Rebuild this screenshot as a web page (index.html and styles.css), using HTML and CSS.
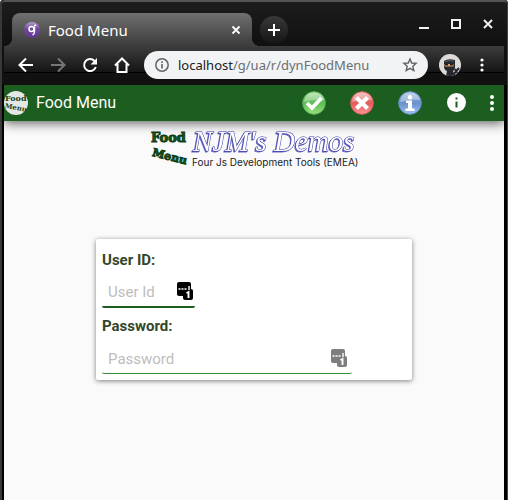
FILE: index.html
```html
<!DOCTYPE html>
<html lang="en">
<head>
<meta charset="utf-8">
<title>Food Menu</title>
<link rel="stylesheet" href="styles.css">
</head>
<body>
<div class="window">
  <header class="chrome">
    <div class="tabstrip">
      <div class="tab">
        <svg class="favicon" width="16" height="16" viewBox="0 0 16 16" aria-hidden="true">
          <defs><linearGradient id="violet" x2="0" y2="1"><stop offset="0" stop-color="#b49acb"/><stop offset=".45" stop-color="#70489a"/><stop offset="1" stop-color="#5f3693"/></linearGradient></defs>
          <circle cx="8" cy="8" r="8" fill="url(#violet)"/>
          <circle cx="7.500" cy="7" r="2.500" fill="none" stroke="#fff" stroke-width="1.500"/>
          <path d="M10.500 5v4.500c0 2-.8 3-2 3.500M10 4l2-1" fill="none" stroke="#fff" stroke-width="1.400"/>
        </svg>
        <span class="tab-title">Food Menu</span>
        <button class="icon-button close" aria-label="Close tab"><svg width="10" height="10" viewBox="0 0 10 10"><path d="M1.500 1.500l7 7m0-7l-7 7" stroke="#fff" stroke-width="1.800"/></svg></button>
      </div>
      <button class="new-tab" aria-label="New tab"><svg width="14" height="14" viewBox="0 0 14 14"><path d="M7 1v12M1 7h12" stroke="#fff" stroke-width="2"/></svg></button>
      <div class="window-buttons">
        <button class="icon-button" aria-label="Minimize"><svg width="10" height="10" viewBox="0 0 10 10"><path d="M0 9h10" stroke="#f1f1f1" stroke-width="2"/></svg></button>
        <button class="icon-button" aria-label="Maximize"><svg width="10" height="10" viewBox="0 0 10 10"><path d="M1 1h8v8H1z" fill="none" stroke="#f1f1f1" stroke-width="2"/></svg></button>
        <button class="icon-button" aria-label="Close window"><svg width="10" height="10" viewBox="0 0 10 10"><path d="M1 1l8 8m0-8L1 9" stroke="#f1f1f1" stroke-width="2"/></svg></button>
      </div>
    </div>
    <nav class="toolbar">
      <button class="icon-button" aria-label="Back"><svg width="16" height="16" viewBox="0 0 16 16"><path d="M15 8H2M8 1.500L1.500 8 8 14.500" fill="none" stroke="#fff" stroke-width="2"/></svg></button>
      <button class="icon-button" aria-label="Forward"><svg width="16" height="16" viewBox="0 0 16 16"><path d="M1 8h13M8 1.500L14.500 8 8 14.500" fill="none" stroke="#777" stroke-width="2"/></svg></button>
      <button class="icon-button" aria-label="Reload"><svg width="16" height="16" viewBox="0 0 16 16"><path d="M13.800 10A6 6 0 1 1 12.500 4" fill="none" stroke="#fff" stroke-width="2"/><path d="M15 1v6.500H8.500z" fill="#fff"/></svg></button>
      <button class="icon-button" aria-label="Home"><svg width="16" height="16" viewBox="0 0 16 16"><path d="M1 8.500L8 1.500l7 7M3.500 7v8h9V7" fill="none" stroke="#fff" stroke-width="2"/></svg></button>
      <div class="address">
        <svg width="14" height="14" viewBox="0 0 14 14" aria-hidden="true"><circle cx="7" cy="7" r="6.200" fill="none" stroke="#5f6368" stroke-width="1.500"/><path d="M7 6v4.500M7 3.300v1.600" stroke="#5f6368" stroke-width="1.600"/></svg>
        <span class="url"><span class="host">localhost</span>/g/ua/r/dynFoodMenu</span>
        <button class="icon-button" aria-label="Bookmark"><svg width="16" height="16" viewBox="0 0 16 16"><path d="M8 2l1.700 4 4.400.4-3.300 2.900 1 4.300L8 11.300l-3.800 2.300 1-4.300L1.900 6.400 6.300 6z" fill="none" stroke="#5f6368" stroke-width="1.400"/></svg></button>
      </div>
      <button class="icon-button avatar" aria-label="Profile">
        <svg width="22" height="22" viewBox="0 0 22 22"><defs><clipPath id="face"><circle cx="11" cy="11" r="11"/></clipPath></defs><g clip-path="url(#face)"><path d="M0 0h22v22H0z" fill="#dedad8"/><path d="M5 7Q9 4 16 6v8q-1 4-5 4-6-1-6-5z" fill="#25282d"/><path d="M5.500 10h9v2.500h-9z" fill="#dda06b"/><path d="M6 10.800h3m2 0h3" stroke="#26211f" stroke-width="1.400"/><path d="M8 17h6l2 5H7z" fill="#24272d"/><path d="M14 21l6-7M16 15l2 4" stroke="#24272d" stroke-width="2"/><path d="M6 7.500q4-1.500 9-.5" fill="none" stroke="#596471"/></g></svg>
      </button>
      <button class="icon-button" aria-label="Browser menu"><svg width="4" height="14" viewBox="0 0 4 14" fill="#fff"><circle cx="2" cy="2" r="1.600"/><circle cx="2" cy="7" r="1.600"/><circle cx="2" cy="12" r="1.600"/></svg></button>
    </nav>
  </header>

  <div class="page">
    <header class="appbar">
      <svg class="app-logo" width="24" height="24" viewBox="0 0 24 24" aria-hidden="true">
        <circle cx="12" cy="12" r="12" fill="#e4e8e4"/>
        <g class="stamp"><text x="1" y="10">Food</text><text class="stamp-lower" x="1" y="17" transform="rotate(10 1 14)">Menu</text></g>
      </svg>
      <h1>Food Menu</h1>
      <div class="actions">
        <button class="icon-button" aria-label="Accept"><svg width="24" height="24" viewBox="0 0 24 24"><defs><linearGradient id="green" x2="0" y2="1"><stop stop-color="#a9dda2"/><stop offset=".5" stop-color="#5dbb57"/><stop offset="1" stop-color="#9be17b"/></linearGradient></defs><circle cx="12" cy="12" r="11.300" fill="url(#green)" stroke="#62b65a"/><path d="M2 11Q3 2 12 1.500 21 2 22 9 12 8 2 11z" fill="#fff" opacity=".3"/><path d="M5 12l5 5 9.500-10" fill="none" stroke="#fff" stroke-width="3.800"/></svg></button>
        <button class="icon-button" aria-label="Cancel"><svg width="24" height="24" viewBox="0 0 24 24"><defs><linearGradient id="red" x2="0" y2="1"><stop stop-color="#f5b0b0"/><stop offset=".5" stop-color="#e45a5a"/><stop offset="1" stop-color="#ff9696"/></linearGradient></defs><circle cx="12" cy="12" r="11.300" fill="url(#red)" stroke="#dc5f5f"/><path d="M2 11Q3 2 12 1.500 21 2 22 9 12 8 2 11z" fill="#fff" opacity=".3"/><path d="M6.500 6.500l11 11m0-11l-11 11" stroke="#fff" stroke-width="4.200"/></svg></button>
        <button class="icon-button" aria-label="About"><svg width="24" height="24" viewBox="0 0 24 24"><defs><linearGradient id="blue" x2="0" y2="1"><stop stop-color="#a9c2e5"/><stop offset=".5" stop-color="#6890cb"/><stop offset="1" stop-color="#9fc0ee"/></linearGradient></defs><circle cx="12" cy="12" r="11.300" fill="url(#blue)" stroke="#6b91c8"/><path d="M2 11Q3 2 12 1.500 21 2 22 9 12 8 2 11z" fill="#fff" opacity=".3"/><circle cx="12" cy="6.200" r="2.200" fill="#fff"/><path d="M8 9.500h6v8h2.500V20h-9v-2.500H10V12H8z" fill="#fff"/></svg></button>
        <button class="icon-button" aria-label="Information"><svg width="24" height="24" viewBox="0 0 24 24"><circle cx="10.500" cy="11.500" r="9.500" fill="#fff"/><path d="M10.500 10.500v6M10.500 6.500v2" stroke="#1b5e20" stroke-width="2"/></svg></button>
        <button class="icon-button more" aria-label="More"><svg width="4" height="16" viewBox="0 0 4 16" fill="#fff"><circle cx="2" cy="2" r="2"/><circle cx="2" cy="8" r="2"/><circle cx="2" cy="14" r="2"/></svg></button>
      </div>
    </header>

    <main>
      <svg class="banner" width="208" height="46" viewBox="0 0 208 46" role="img" aria-label="NJM's Demos">
        <g class="wordmark"><text x="1" y="17">Food</text><text class="lower" x="3" y="31" transform="rotate(14 3 26)">Menu</text></g>
        <text class="script" x="43" y="26">NJM's Demos</text>
        <text class="tagline" x="42" y="41">Four Js Development Tools (EMEA)</text>
      </svg>
      <form class="card">
        <label for="user">User ID:</label>
        <div class="field user-field">
          <input id="user" type="text" placeholder="User Id">
          <svg class="key" width="18" height="18" viewBox="0 0 18 18" aria-hidden="true"><rect x="1" width="14" height="14" rx="2"/><rect x="7" y="7" width="10" height="11" rx="2"/><path d="M2.500 7h2M5.500 7h2M8.500 7h2M13 4v4" stroke="#fff" stroke-width="1.400"/><path d="M10.500 11l2-1v6" fill="none" stroke="#fff" stroke-width="1.900"/></svg>
        </div>
        <label for="password">Password:</label>
        <div class="field password-field">
          <input id="password" type="password" placeholder="Password">
          <svg class="key" width="18" height="18" viewBox="0 0 18 18" aria-hidden="true"><rect x="1" width="14" height="14" rx="2"/><rect x="7" y="7" width="10" height="11" rx="2"/><path d="M2.500 7h2M5.500 7h2M8.500 7h2M13 4v4" stroke="#fff" stroke-width="1.400"/><path d="M10.500 11l2-1v6" fill="none" stroke="#fff" stroke-width="1.900"/></svg>
        </div>
      </form>
    </main>
  </div>
</div>
</body>
</html>
```
FILE: styles.css
```css
* { box-sizing: border-box; }
body { margin: 0; background: #fff; font-family: Roboto, sans-serif; }
button { margin: 0; padding: 0; border: 0; background: none; }
svg { display: block; flex: none; }

.window {
  display: flex;
  flex-direction: column;
  min-height: 100vh;
  padding: 0 3px 0 2px;
  border-left: 2px solid #383838;
  border-right: 1px solid #444;
  border-radius: 3px 3px 0 0;
  background: #000;
}

.icon-button { display: flex; align-items: center; justify-content: center; flex: none; }

.chrome {
  margin: 0 -3px 0 -2px;
  padding: 0 3px 1px 2px;
  border-top: 2px solid #555;
  border-radius: 3px 3px 0 0;
  background: linear-gradient(#1d1d1d, #101010 44px);
  font-family: "Noto Sans", sans-serif;
}
.tabstrip { display: flex; height: 44px; padding: 11px 11px 0 8px; }
.tab {
  position: relative;
  display: flex;
  align-items: center;
  width: 240px;
  padding: 0 11px 0 12px;
  border-radius: 8px 8px 0 0;
  background: linear-gradient(#707070, #3c3c3c);
}
.tab::before, .tab::after {
  content: "";
  position: absolute;
  bottom: 0;
  width: 8px;
  height: 8px;
}
.tab::before { right: 100%; background: radial-gradient(circle at 0 0, transparent 8px, #404040 8px); }
.tab::after { left: 100%; background: radial-gradient(circle at 100% 0, transparent 8px, #404040 8px); }
.tab-title { flex: 1; padding-left: 8px; color: #fff; font-size: 15px; line-height: 24px; }
.new-tab {
  display: flex;
  align-items: center;
  justify-content: center;
  width: 28px;
  height: 28px;
  margin: 3px 0 0 8px;
  border-radius: 50%;
  background: linear-gradient(#383838, #151515);
}
.window-buttons { display: flex; gap: 22px; margin-left: auto; padding-bottom: 11px; }

.toolbar {
  display: flex;
  align-items: center;
  height: 38px;
  padding: 0 20px 0 14px;
  gap: 16px;
  background: linear-gradient(#3c3c3c, #151515 26px, #000 26px, #000 27px, #111 27px);
}
.address {
  display: flex;
  align-items: center;
  flex: 1;
  min-width: 0;
  height: 28px;
  margin: 0 -5px 0 -2px;
  padding: 0 10px 0 11px;
  gap: 9px;
  border-radius: 14px;
  background: #f1f3f4;
}
.avatar { margin-right: 3px; }
.url { flex: 1; color: #6b6f73; font-size: 13px; line-height: 20px; white-space: nowrap; }
.host { color: #202124; }

.page { display: flex; flex: 1; flex-direction: column; background: #fafafa; }
.appbar {
  display: flex;
  align-items: center;
  height: 36px;
  padding-right: 10px;
  background: #1b5e20;
  box-shadow: 0 2px 12px rgba(0, 0, 0, .65);
  clip-path: inset(0 0 -20px 0);
}
.stamp { fill: #17401a; font: bold 8px "DejaVu Serif", serif; }
.stamp-lower { font-size: 7px; }
h1 { margin: 0; padding-left: 8px; color: #fff; font-size: 16px; font-weight: 400; line-height: 24px; }
.actions { display: flex; align-items: center; gap: 24px; margin-left: auto; }
.more { margin-left: -4px; }

main { display: flex; flex-direction: column; align-items: center; padding: 4px 16px 16px; }
.wordmark { fill: #14581c; stroke: #0d3d13; stroke-width: 1px; font: bold 13px "DejaVu Serif", serif; }
.lower { font-size: 11px; }
.script {
  fill: #fff;
  stroke: #3434a8;
  stroke-width: 1px;
  paint-order: stroke;
  font: italic 29px "Liberation Serif", serif;
  filter: drop-shadow(-1px 1px 0 #6464bc);
}
.tagline { fill: #222; font: 10px Inter, sans-serif; }

.card {
  width: 100%;
  max-width: 316px;
  margin-top: 68px;
  padding: 11px 6px 6px;
  border-radius: 2px;
  background: #fff;
  box-shadow: 0 1px 5px rgba(0, 0, 0, .5);
}
label { display: block; color: #33472a; font-size: 15px; font-weight: 700; line-height: 20px; }
.field { position: relative; display: flex; }
.user-field { width: 93px; margin-bottom: 8px; }
.password-field { width: 250px; max-width: 100%; }
.field input {
  width: 100%;
  height: 38px;
  padding: 8px 24px 0 6px;
  border: 0;
  border-bottom: 2px solid #1b5e20;
  border-radius: 2px;
  outline: 0;
  background: transparent;
  color: #333;
  font: 15px Roboto, sans-serif;
}
.field input::placeholder { color: #bdbdbd; opacity: 1; }
.password-field input { border-bottom: 1px solid #388e3c; }
.key { position: absolute; right: 1px; bottom: 8px; }
.password-field .key { right: 4px; bottom: 7px; opacity: .5; }
```
